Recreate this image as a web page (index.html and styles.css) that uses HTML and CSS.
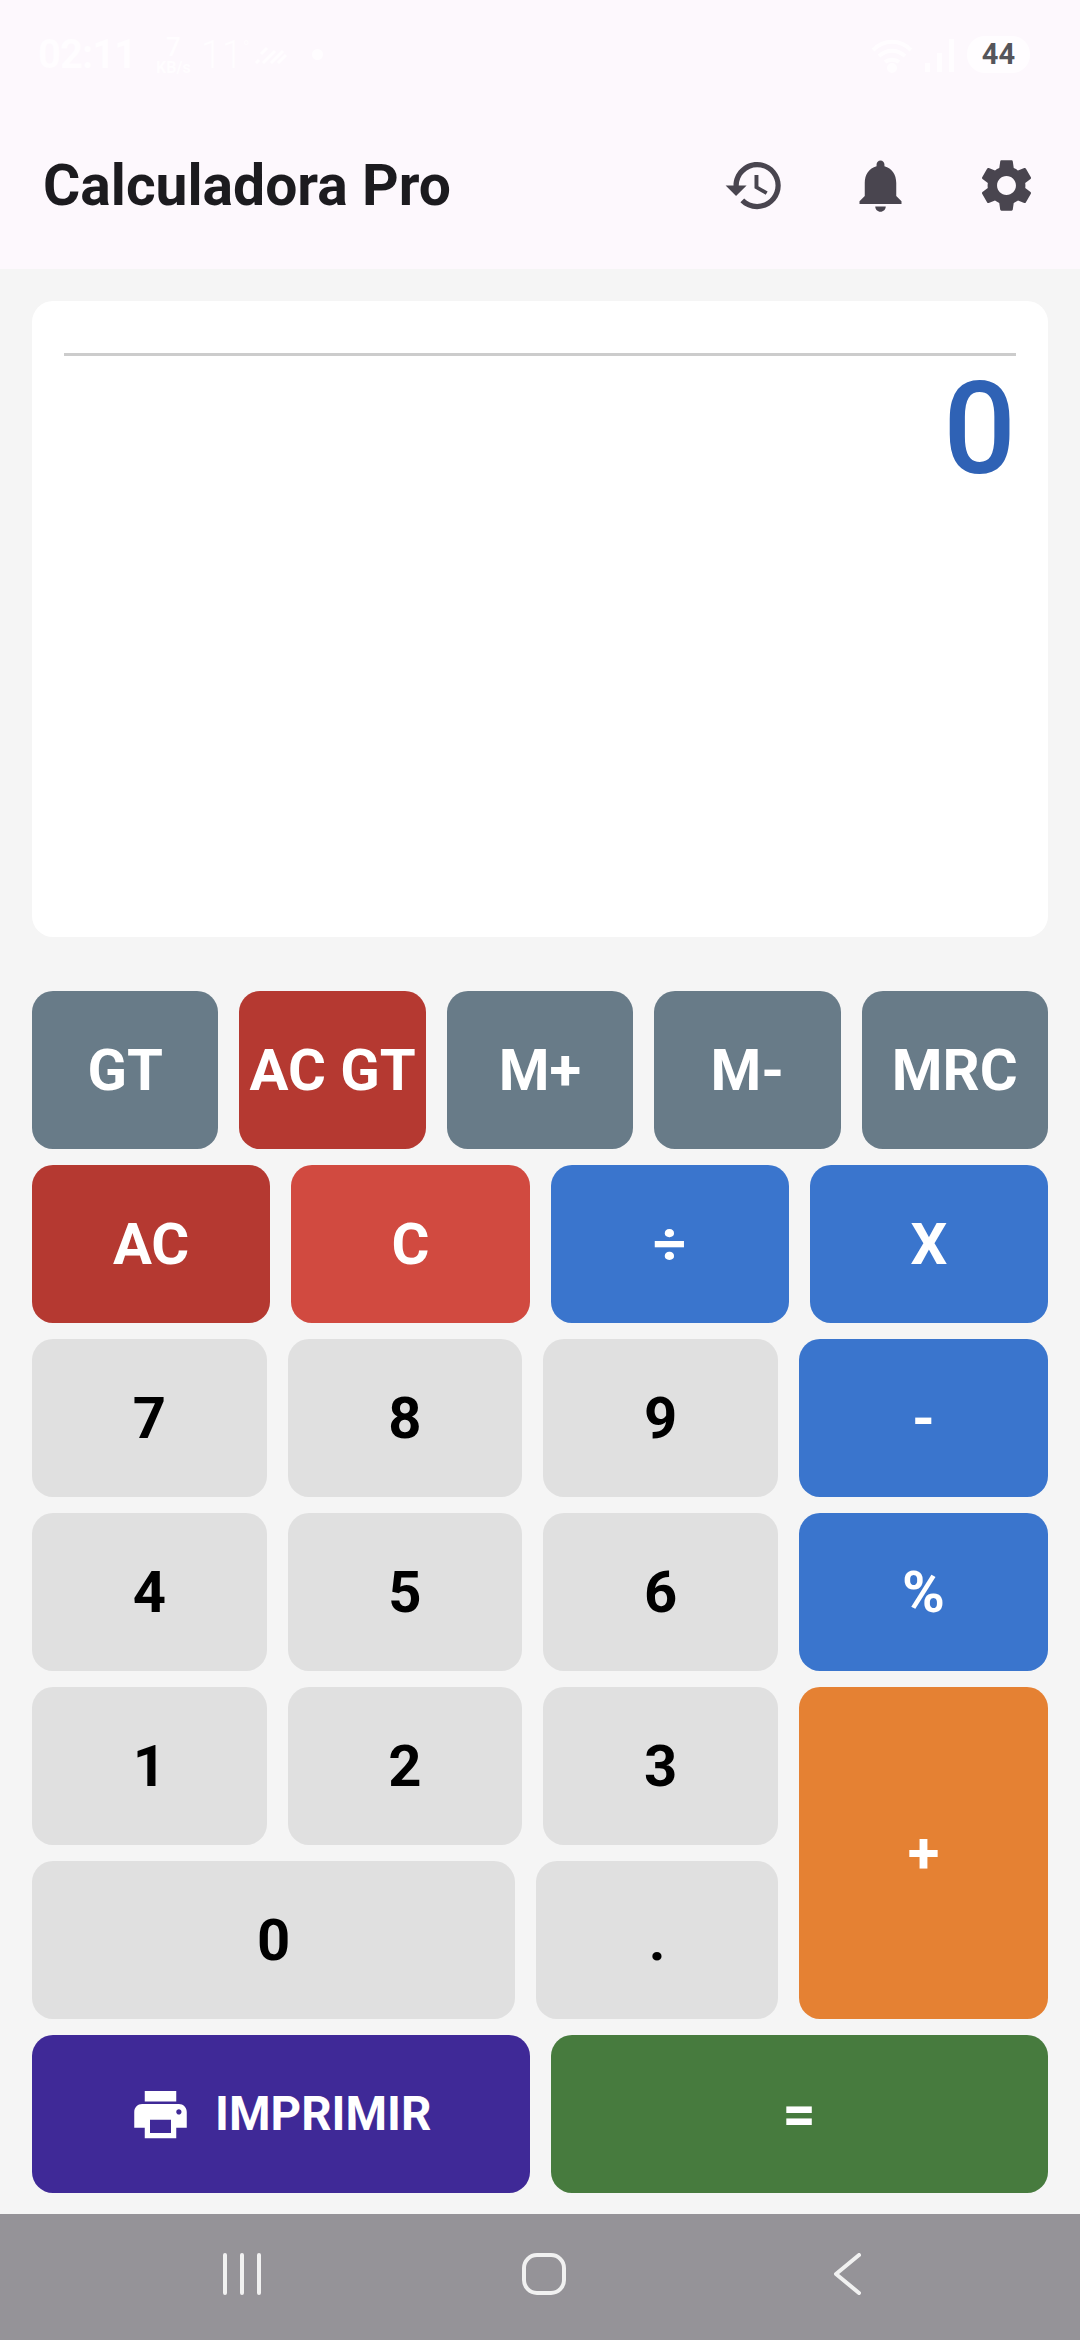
FILE: index.html
```html
<!DOCTYPE html>
<html lang="pt-BR">
<head>
  <meta charset="UTF-8" />
  <meta name="viewport" content="width=device-width, initial-scale=1.0"/>
  <title>Calculadora Pro</title>
  <link rel="stylesheet" href="styles.css">
</head>
<body>

<header class="app-top">
  <div class="status-bar">
    <div class="status-left">
      <span class="clock">02:11</span>
      <span class="speed"><b>7</b><small>KB/s</small></span>
      <span class="temp">11<sup>°</sup></span>
      <svg class="rain" viewBox="0 0 32 18" width="32" height="18"><path d="M1 17l3-3M6 8l6-6M8 17l12-12M16 17l12-12M23 17l8-8" /></svg>
      <span class="dot"></span>
    </div>
    <div class="status-right">
      <svg class="wifi" viewBox="0 0 44 36" width="44" height="36"><path d="M2 13c11-11 27-11 38 0M8 19c8-7 18-7 26 0M14 25c4-3 10-3 14 0" /><circle cx="21" cy="31" r="3" /></svg>
      <svg class="signal" viewBox="0 0 30 36" width="30" height="36"><rect x="0" y="26" width="5" height="9" /><rect x="12" y="16" width="5" height="19" /><rect x="24" y="2" width="5" height="33" /></svg>
      <span class="battery">44</span>
    </div>
  </div>
  <div class="toolbar">
    <div class="logo">Calculadora Pro</div>
    <nav class="tool-icons">
      <svg viewBox="0 0 24 24"><path d="M13 3c-4.97 0-9 4.03-9 9H1l3.89 3.89.07.14L9 12H6c0-3.87 3.13-7 7-7s7 3.13 7 7-3.13 7-7 7c-1.93 0-3.68-.79-4.94-2.06l-1.42 1.42C8.27 19.99 10.51 21 13 21c4.97 0 9-4.03 9-9s-4.03-9-9-9zm-1 5v5l4.28 2.54.72-1.21-3.5-2.08V8H12z"/></svg>
      <svg viewBox="0 0 24 24"><path d="M12 22c1.1 0 2-.9 2-2h-4c0 1.1.89 2 2 2zm6-6v-5c0-3.07-1.64-5.64-4.5-6.32V4c0-.83-.67-1.5-1.5-1.5s-1.5.67-1.5 1.5v.68C7.63 5.36 6 7.92 6 11v5l-2 2v1h16v-1l-2-2z"/></svg>
      <svg viewBox="0 0 24 24"><path d="M19.14 12.94c.04-.3.06-.61.06-.94 0-.32-.02-.64-.07-.94l2.03-1.58c.18-.14.23-.41.12-.61l-1.92-3.32c-.12-.22-.37-.29-.59-.22l-2.39.96c-.5-.38-1.03-.7-1.62-.94L14.4 2.81c-.04-.24-.24-.41-.48-.41h-3.84c-.24 0-.43.17-.47.41L9.25 5.35c-.59.24-1.13.57-1.62.94l-2.39-.96c-.22-.08-.47 0-.59.22L2.74 8.87c-.12.21-.08.47.12.61l2.03 1.58c-.05.3-.09.63-.09.94s.02.64.07.94l-2.03 1.58c-.18.14-.23.41-.12.61l1.92 3.32c.12.22.37.29.59.22l2.39-.96c.5.38 1.03.7 1.62.94l.36 2.54c.05.24.24.41.48.41h3.84c.24 0 .44-.17.47-.41l.36-2.54c.59-.24 1.13-.56 1.62-.94l2.39.96c.22.08.47 0 .59-.22l1.92-3.32c.12-.22.07-.47-.12-.61l-2.01-1.58zM12 15.6c-1.98 0-3.6-1.62-3.6-3.6s1.62-3.6 3.6-3.6 3.6 1.62 3.6 3.6-1.62 3.6-3.6 3.6z"/></svg>
    </nav>
  </div>
</header>

<main class="content">
  <section class="display">
    <div class="tape"></div>
    <div class="result">0</div>
  </section>

  <section class="keys">
    <div class="row row-mem">
      <button class="key slate">GT</button>
      <button class="key dark-red">AC GT</button>
      <button class="key slate">M+</button>
      <button class="key slate">M-</button>
      <button class="key slate">MRC</button>
    </div>
    <div class="row row-ops">
      <button class="key dark-red">AC</button>
      <button class="key red">C</button>
      <button class="key blue">÷</button>
      <button class="key blue">X</button>
    </div>
    <div class="pad">
      <div class="row row-digits">
        <button class="key num">7</button>
        <button class="key num">8</button>
        <button class="key num">9</button>
      </div>
      <button class="key blue">-</button>
      <div class="row row-digits">
        <button class="key num">4</button>
        <button class="key num">5</button>
        <button class="key num">6</button>
      </div>
      <button class="key blue">%</button>
      <div class="row row-digits">
        <button class="key num">1</button>
        <button class="key num">2</button>
        <button class="key num">3</button>
      </div>
      <button class="key orange plus">+</button>
      <div class="row row-zero">
        <button class="key num">0</button>
        <button class="key num">.</button>
      </div>
    </div>
    <div class="row row-bottom">
      <button class="key purple print">
        <svg viewBox="0 0 24 24"><path d="M19 8H5c-1.66 0-3 1.34-3 3v6h4v4h12v-4h4v-6c0-1.66-1.34-3-3-3zm-3 11H8v-5h8v5zm3-7c-.55 0-1-.45-1-1s.45-1 1-1 1 .45 1 1-.45 1-1 1zm-1-9H6v4h12V3z"/></svg>
        IMPRIMIR
      </button>
      <button class="key green">=</button>
    </div>
  </section>
</main>

<footer class="nav-bar">
  <svg class="nav-recents" viewBox="0 0 38 42" width="38" height="42"><path d="M2 2v38M19 2v38M36 2v38"/></svg>
  <svg class="nav-home" viewBox="0 0 44 42" width="44" height="42"><rect x="2" y="2" width="40" height="38" rx="13"/></svg>
  <svg class="nav-back" viewBox="0 0 27 42" width="27" height="42"><path d="M25 2L2 21l23 19"/></svg>
</footer>

</body>
</html>
```

FILE: styles.css
```css
* {
  margin: 0;
  padding: 0;
  box-sizing: border-box;
  font-family: 'Roboto', sans-serif;
}

html, body {
  height: 100%;
  background: #f5f5f5;
  overflow: hidden;
}

body {
  display: flex;
  flex-direction: column;
}

.app-top {
  height: 269px;
  flex-shrink: 0;
  background: #fdf8fd;
}

.status-bar {
  height: 107px;
  padding: 34px 50px 0 38px;
  display: flex;
  justify-content: space-between;
  align-items: flex-start;
  color: #fffdff;
}

.status-left,
.status-right {
  display: flex;
  align-items: center;
  height: 41px;
}

.clock {
  font-size: 40px;
  font-weight: 700;
  letter-spacing: -1px;
}

.speed {
  display: flex;
  flex-direction: column;
  align-items: center;
  margin-left: 20px;
  line-height: 1;
}

.speed b {
  font-size: 26px;
  font-weight: 500;
}

.speed small {
  font-size: 16px;
  font-weight: 700;
}

.temp {
  margin-left: 10px;
  font-size: 38px;
  font-weight: 300;
}

.temp sup {
  font-size: 18px;
}

.rain {
  margin-left: 5px;
  fill: none;
  stroke: #fffdff;
  stroke-width: 3;
}

.dot {
  width: 11px;
  height: 11px;
  margin-left: 25px;
  border-radius: 50%;
  background: #fffdff;
}

.wifi {
  fill: #fffdff;
  stroke: #fffdff;
  stroke-width: 4;
}

.wifi path {
  fill: none;
}

.signal {
  margin-left: 10px;
  fill: #fffdff;
}

.battery {
  width: 63px;
  height: 37px;
  margin-left: 12px;
  border-radius: 18px;
  background: #fffdff;
  color: #55555a;
  font-size: 29px;
  font-weight: 700;
  line-height: 37px;
  text-align: center;
}

.toolbar {
  height: 156px;
  padding: 0 42px 0 43px;
  display: flex;
  justify-content: space-between;
  align-items: center;
}

.logo {
  font-size: 57px;
  font-weight: 700;
  color: #1c1b1f;
}

.tool-icons {
  display: flex;
  gap: 63px;
}

.tool-icons svg {
  display: block;
  width: 63px;
  height: 63px;
  fill: #49454f;
}

.content {
  flex: 1;
  padding: 32px 32px 0;
}

.display {
  height: 636px;
  padding: 52px 32px 0;
  background: #fff;
  border-radius: 21px;
}

.tape {
  height: 3px;
  background: #cccccc;
}

.result {
  font-size: 128px;
  font-weight: 500;
  line-height: 146px;
  text-align: right;
  color: #2f62b5;
}

.keys {
  margin-top: 54px;
  display: flex;
  flex-direction: column;
  gap: 16px;
}

.row {
  display: grid;
  column-gap: 21px;
  height: 158px;
}

.row-mem { grid-template-columns: repeat(5, 1fr); }
.row-ops { grid-template-columns: repeat(4, 1fr); }
.row-digits { grid-template-columns: repeat(3, 1fr); }
.row-zero { grid-template-columns: 2fr 1fr; }
.row-bottom { grid-template-columns: 1fr 1fr; }

.pad {
  display: grid;
  grid-template-columns: 1fr 249px;
  grid-auto-rows: 158px;
  gap: 16px 21px;
}

.plus {
  grid-row: span 2;
}

.key {
  border: none;
  border-radius: 21px;
  font-size: 58px;
  font-weight: 700;
  color: #fff;
  white-space: nowrap;
  display: flex;
  align-items: center;
  justify-content: center;
}

.slate { background: #687b88; }
.dark-red { background: #b53931; }
.red { background: #d14a40; }
.blue { background: #3a75cd; }
.orange { background: #e58133; }
.purple { background: #3f2997; }
.green { background: #477b3e; }

.num {
  background: #e0e0e0;
  color: #000;
}

.print {
  font-size: 47.5px;
  gap: 23px;
  padding-right: 1px;
}

.print svg {
  width: 63px;
  height: 63px;
  fill: #fff;
}

.nav-bar {
  height: 126px;
  flex-shrink: 0;
  background: #959398;
  display: flex;
  align-items: center;
  gap: 261px;
  padding: 0 0 6px 223px;
}

.nav-bar svg {
  fill: none;
  stroke: #f1f1f1;
  stroke-width: 4;
  stroke-linecap: round;
  stroke-linejoin: round;
}

.nav-back {
  margin-left: 7px;
}
```
